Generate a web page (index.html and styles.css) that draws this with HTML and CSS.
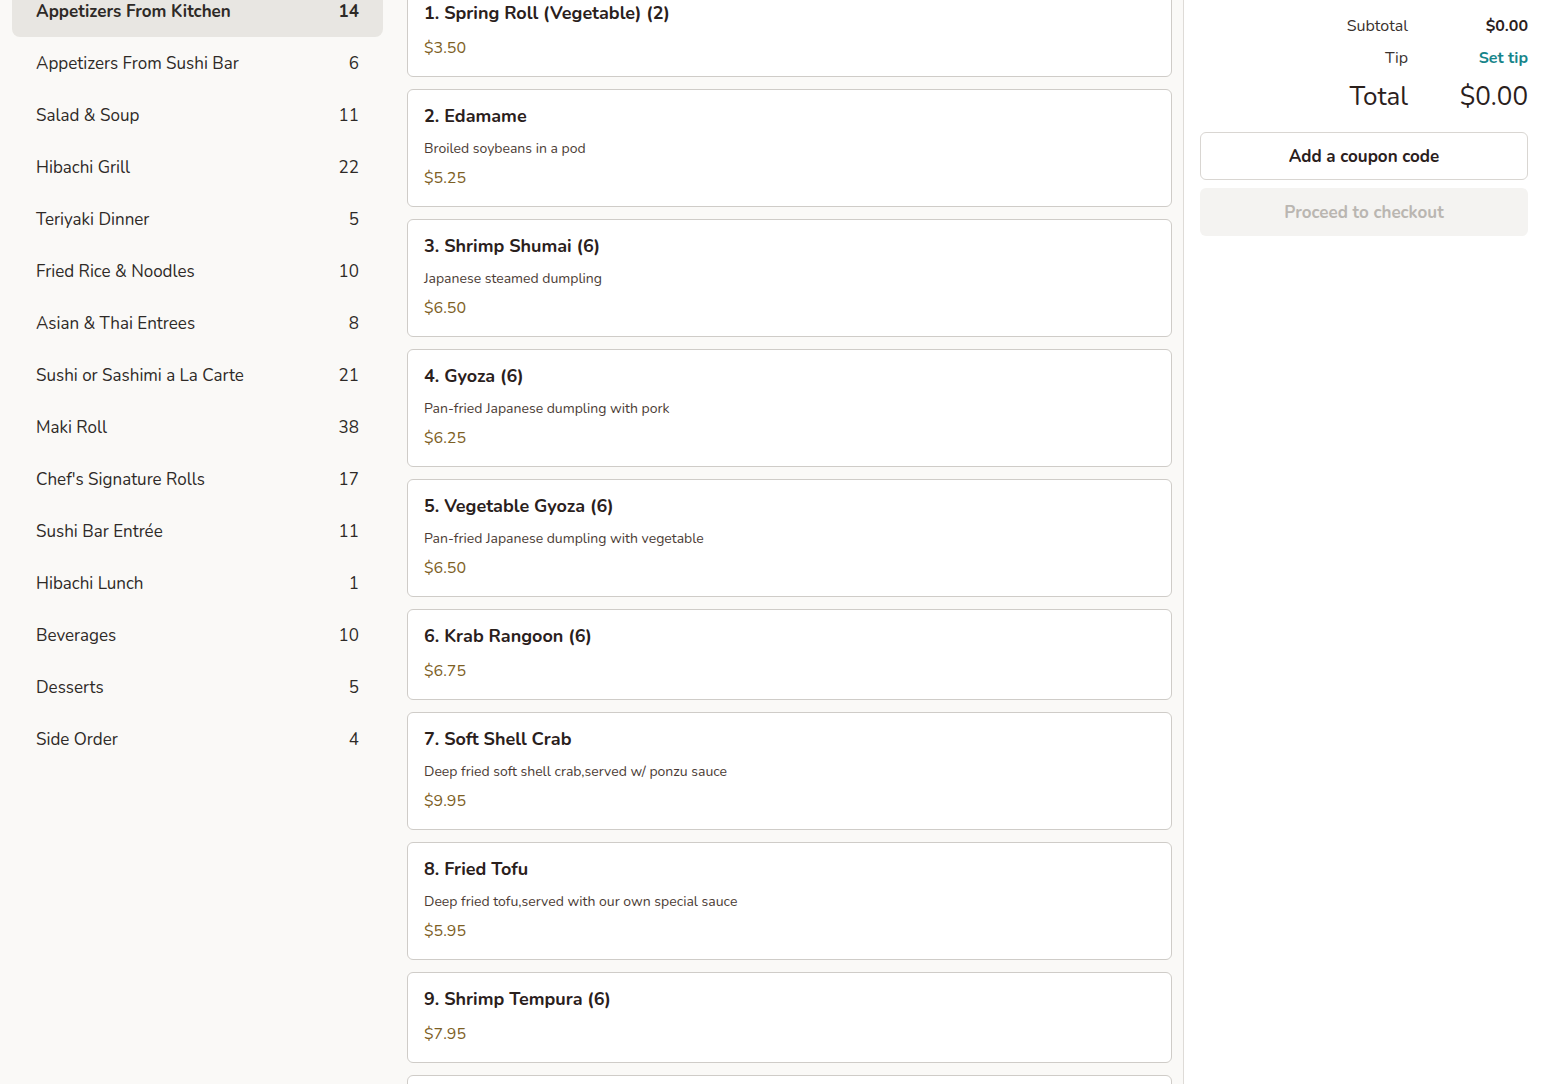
FILE: index.html
```html
<!DOCTYPE html>
<html>
<head>
<meta charset="utf-8">
<link rel="stylesheet" href="styles.css">
</head>
<body>
<div class="page">
  <nav class="sidebar">
    <ul class="cats">
      <li class="cat active"><span>Appetizers From Kitchen</span><span>14</span></li>
      <li class="cat"><span>Appetizers From Sushi Bar</span><span>6</span></li>
      <li class="cat"><span>Salad &amp; Soup</span><span>11</span></li>
      <li class="cat"><span>Hibachi Grill</span><span>22</span></li>
      <li class="cat"><span>Teriyaki Dinner</span><span>5</span></li>
      <li class="cat"><span>Fried Rice &amp; Noodles</span><span>10</span></li>
      <li class="cat"><span>Asian &amp; Thai Entrees</span><span>8</span></li>
      <li class="cat"><span>Sushi or Sashimi a La Carte</span><span>21</span></li>
      <li class="cat"><span>Maki Roll</span><span>38</span></li>
      <li class="cat"><span>Chef's Signature Rolls</span><span>17</span></li>
      <li class="cat"><span>Sushi Bar Entrée</span><span>11</span></li>
      <li class="cat"><span>Hibachi Lunch</span><span>1</span></li>
      <li class="cat"><span>Beverages</span><span>10</span></li>
      <li class="cat"><span>Desserts</span><span>5</span></li>
      <li class="cat"><span>Side Order</span><span>4</span></li>
    </ul>
  </nav>
  <main class="menu">
    <div class="card"><div class="title">1. Spring Roll (Vegetable) (2)</div><div class="price">$3.50</div></div>
    <div class="card"><div class="title">2. Edamame</div><div class="desc">Broiled soybeans in a pod</div><div class="price">$5.25</div></div>
    <div class="card"><div class="title">3. Shrimp Shumai (6)</div><div class="desc">Japanese steamed dumpling</div><div class="price">$6.50</div></div>
    <div class="card"><div class="title">4. Gyoza (6)</div><div class="desc">Pan-fried Japanese dumpling with pork</div><div class="price">$6.25</div></div>
    <div class="card"><div class="title">5. Vegetable Gyoza (6)</div><div class="desc">Pan-fried Japanese dumpling with vegetable</div><div class="price">$6.50</div></div>
    <div class="card"><div class="title">6. Krab Rangoon (6)</div><div class="price">$6.75</div></div>
    <div class="card"><div class="title">7. Soft Shell Crab</div><div class="desc">Deep fried soft shell crab,served w/ ponzu sauce</div><div class="price">$9.95</div></div>
    <div class="card"><div class="title">8. Fried Tofu</div><div class="desc">Deep fried tofu,served with our own special sauce</div><div class="price">$5.95</div></div>
    <div class="card"><div class="title">9. Shrimp Tempura (6)</div><div class="price">$7.95</div></div>
    <div class="card card-empty"></div>
  </main>
  <aside class="cart">
    <div class="totals">
      <div class="row"><span class="label">Subtotal</span><span class="value strong">$0.00</span></div>
      <div class="row"><span class="label">Tip</span><span class="value link">Set tip</span></div>
      <div class="row total"><span class="label">Total</span><span class="value">$0.00</span></div>
    </div>
    <button class="btn coupon">Add a coupon code</button>
    <button class="btn checkout">Proceed to checkout</button>
  </aside>
</div>
</body>
</html>
```

FILE: styles.css
```css
html, body {
  margin: 0;
  padding: 0;
  height: 100%;
  overflow: hidden;
}
body {
  background: #faf9f7;
  font-family: "Nunito", "Lato", "Noto Sans", sans-serif;
  color: #2b2320;
}
.page {
  display: grid;
  grid-template-columns: 395px 788px 1fr;
  height: 1084px;
}
.sidebar {
  padding: 0 12px;
}
.cats {
  list-style: none;
  margin: -15px 0 0 0;
  padding: 0;
}
.cat {
  display: flex;
  justify-content: space-between;
  align-items: center;
  height: 52px;
  padding: 0 24px;
  font-size: 17px;
  color: #2e2a27;
  border-radius: 8px;
}
.cat.active {
  background: #e8e6e2;
  font-weight: 700;
}
.menu {
  padding: 0 0 0 12px;
  margin-top: -14px;
  display: flex;
  flex-direction: column;
  gap: 12px;
}
.card {
  background: #fff;
  border: 1px solid #cfccc8;
  border-radius: 6px;
  padding: 16px 16px 17px 16px;
  width: 731px;
  flex-shrink: 0;
}
.card-empty {
  height: 60px;
}
.title {
  font-size: 18px;
  line-height: 20px;
  font-weight: 700;
  color: #2a201c;
}
.desc {
  margin-top: 13px;
  font-size: 14px;
  line-height: 20px;
  color: #4b3c35;
}
.price {
  margin-top: 8px;
  font-size: 16px;
  line-height: 22px;
  color: #7d6024;
}
.title + .price {
  margin-top: 14px;
}
.cart {
  border-left: 1px solid #dedbd7;
  background: #fff;
  padding: 10px 16px 0 16px;
}
.totals {
  display: flex;
  flex-direction: column;
}
.row {
  display: flex;
  justify-content: flex-end;
  align-items: center;
  height: 32px;
  font-size: 16px;
  color: #3a322e;
}
.row .label {
  text-align: right;
}
.row .value {
  width: 120px;
  text-align: right;
}
.strong {
  font-weight: 700;
  color: #2a201c;
}
.link {
  font-weight: 700;
  color: #17858a;
}
.row.total {
  height: 44px;
  font-size: 26px;
  color: #2a201c;
}
.btn {
  display: block;
  width: 100%;
  height: 48px;
  border-radius: 6px;
  font-family: inherit;
  font-size: 17px;
  font-weight: 700;
  cursor: pointer;
}
.coupon {
  margin-top: 14px;
  background: #fff;
  border: 1px solid #d9d6d2;
  color: #2a201c;
}
.checkout {
  margin-top: 8px;
  background: #f4f3f1;
  border: none;
  color: #bab6b1;
}
```
